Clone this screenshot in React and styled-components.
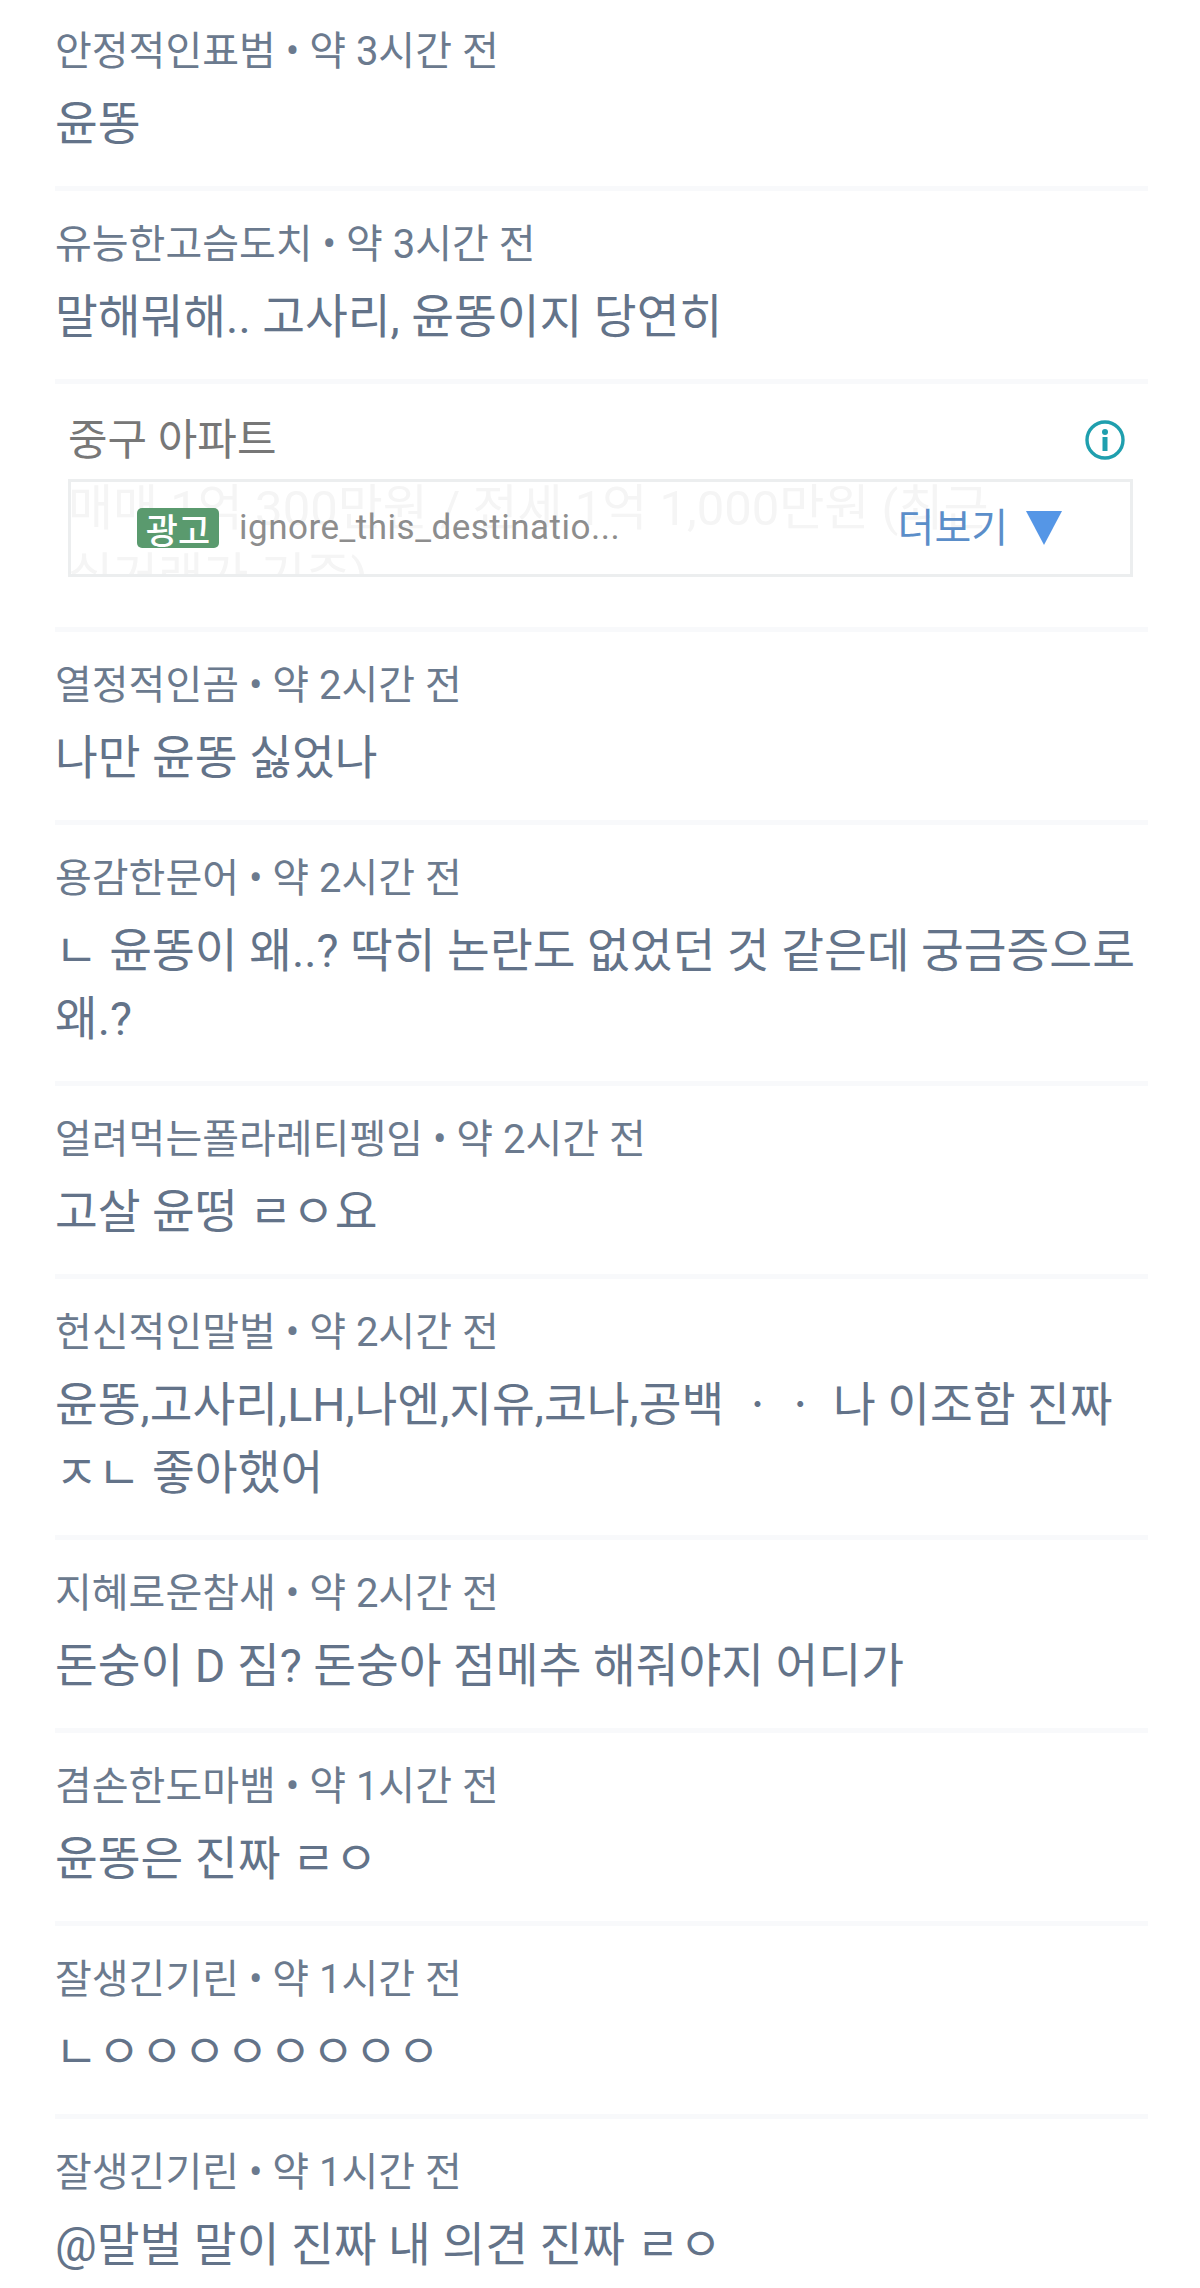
import React from "react";
import styled, { createGlobalStyle } from "styled-components";

const Global = createGlobalStyle`
  html, body { margin: 0; padding: 0; background: #fff; }
  body { font-family: Roboto, "Noto Sans CJK KR", sans-serif; }
`;
const Page = styled.div`
  width: 1200px;
  height: 2288px;
  overflow: hidden;
  box-sizing: border-box;
  padding: 26px 52px 0 55px;
  display: flex;
  flex-direction: column;
`;
const Comment = styled.div`
  display: flex;
  flex-direction: column;
  padding-bottom: 28px;
  margin-bottom: 28px;
  border-bottom: 5px solid #f8f9fb;
`;
const Meta = styled.div`
  font-size: 40px;
  line-height: 52px;
  color: #6b7a8e;
  margin-bottom: 12px;
`;
const Body = styled.div`
  font-size: 46.5px;
  line-height: 68px;
  color: #637389;
`;
const AdBlock = styled.div`
  padding: 0 15px 50px 13px;
  margin-bottom: 28px;
  border-bottom: 5px solid #f8f9fb;
  display: flex;
  flex-direction: column;
`;
const AdHead = styled.div`
  display: flex;
  align-items: center;
  justify-content: space-between;
  height: 49px;
  margin-bottom: 18px;
`;
const AdTitle = styled.div`
  font-size: 43px;
  color: #777;
  margin-top: -2px;
`;
const InfoWrap = styled.div`
  display: flex;
  margin: 6px 7px 0 0;
`;
const AdBox = styled.div`
  position: relative;
  height: 98px;
  box-sizing: border-box;
  border: 3px solid #eceeef;
  overflow: hidden;
`;
const Ghost = styled.div`
  font-size: 49px;
  line-height: 68px;
  color: #f5f5f5;
  margin: -7px 0 0 -3px;
  padding-right: 90px;
`;
const AdOverlay = styled.div`
  position: absolute;
  inset: 0;
  display: flex;
  align-items: center;
  padding: 0 68px 0 66px;
`;
const Badge = styled.span`
  flex: none;
  width: 82px;
  height: 40px;
  display: flex;
  align-items: center;
  justify-content: center;
  font-size: 35px;
  font-weight: 500;
  background: #5a9a6e;
  color: #fff;
  border-radius: 5px;
  margin-right: 20px;
`;
const Url = styled.span`
  font-size: 35px;
  color: #8d8d8d;
  flex: 1;
  font-family: Roboto, sans-serif;
  letter-spacing: 0.5px;
  margin-top: -2px;
`;
const More = styled.span`
  display: flex;
  align-items: center;
  gap: 18px;
`;
const MoreLabel = styled.span`
  font-size: 40px;
  color: #5b8ec9;
  margin-top: -6px;
`;

const items = [
  ["안정적인표범", "약 3시간 전", "윤똥"],
  ["유능한고슴도치", "약 3시간 전", "말해뭐해.. 고사리, 윤똥이지 당연히"],
  "ad",
  ["열정적인곰", "약 2시간 전", "나만 윤똥 싫었나"],
  ["용감한문어", "약 2시간 전", "ㄴ 윤똥이 왜..? 딱히 논란도 없었던 것 같은데 궁금증으로 왜.?"],
  ["얼려먹는폴라레티펭임", "약 2시간 전", "고살 윤떵 ㄹㅇ요"],
  ["헌신적인말벌", "약 2시간 전", "윤똥,고사리,LH,나엔,지유,코나,공백 ㆍㆍ 나 이조함 진짜 ㅈㄴ 좋아했어"],
  ["지혜로운참새", "약 2시간 전", "돈숭이 D 짐? 돈숭아 점메추 해줘야지 어디가"],
  ["겸손한도마뱀", "약 1시간 전", "윤똥은 진짜 ㄹㅇ"],
  ["잘생긴기린", "약 1시간 전", "ㄴㅇㅇㅇㅇㅇㅇㅇㅇ"],
  ["잘생긴기린", "약 1시간 전", "@말벌 말이 진짜 내 의견 진짜 ㄹㅇ"],
];

const InfoIcon = () => (
  <svg width="42" height="42" viewBox="0 0 42 42">
    <circle cx="21" cy="21" r="18" fill="none" stroke="#1f9fae" strokeWidth="3.4" />
    <circle cx="21" cy="13" r="3" fill="#1f9fae" />
    <rect x="18.5" y="18" width="5" height="14" fill="#1f9fae" />
  </svg>
);
const Triangle = () => (
  <svg width="36" height="34" viewBox="0 0 36 34">
    <polygon points="0,0 36,0 18,34" fill="#5596e6" />
  </svg>
);

export default function App() {
  return (
    <Page>
      <Global />
      {items.map((it, i) =>
        it === "ad" ? (
          <AdBlock key={i}>
            <AdHead>
              <AdTitle>중구 아파트</AdTitle>
              <InfoWrap>
                <InfoIcon />
              </InfoWrap>
            </AdHead>
            <AdBox>
              <Ghost>매매 1억 300만원 / 전세 1억 1,000만원 (최근 실거래가 기준)</Ghost>
              <AdOverlay>
                <Badge>광고</Badge>
                <Url>ignore_this_destinatio...</Url>
                <More>
                  <MoreLabel>더보기</MoreLabel>
                  <Triangle />
                </More>
              </AdOverlay>
            </AdBox>
          </AdBlock>
        ) : (
          <Comment key={i}>
            <Meta>
              {it[0]} • {it[1]}
            </Meta>
            <Body>{it[2]}</Body>
          </Comment>
        )
      )}
    </Page>
  );
}
